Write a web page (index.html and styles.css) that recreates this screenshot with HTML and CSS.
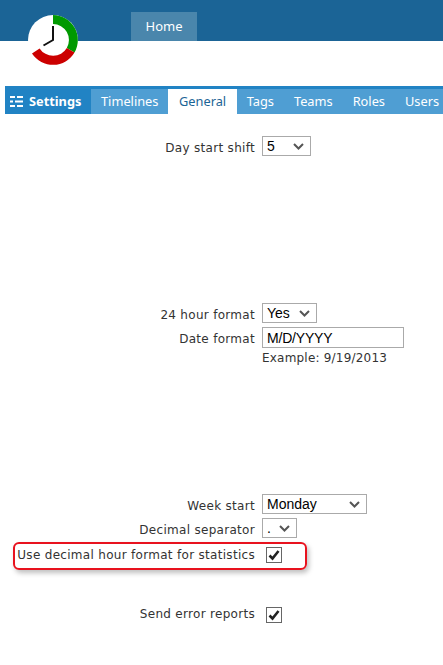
FILE: index.html
```html
<!DOCTYPE html>
<html lang="en">
<head>
  <title>Settings</title>
  <link rel="stylesheet" href="styles.css">
</head>
<body>

  <div class="header">
    <a class="home-tab" href="#">Home</a>
    <svg class="logo" width="50" height="50" viewBox="28 15 50 50">
      <circle cx="53" cy="40" r="25" fill="#fff"/>
      <path d="M53 15A25 25 0 0 1 74.5 52.5L66.8 48A16 16 0 0 0 53 24Z" fill="#009900"/>
      <path d="M74.5 52.5A25 25 0 0 1 32 53.5L39.6 48.4A16 16 0 0 0 66.8 48Z" fill="#cc0000"/>
      <path d="M53 26V40L43.500 45.500" fill="none" stroke="#111" stroke-width="2"/>
    </svg>
  </div>

  <div class="nav">
    <div class="nav-title">
      <svg width="13" height="11" viewBox="0 0 13 11" fill="#fff">
        <path d="M0 0h5v2H0zM7 0h6v2H7zM0 4.500h3v2H0zM5 4.500h8v2H5zM0 9h5v2H0zM7 9h6v2H7z"/>
      </svg>
      Settings
    </div>
    <a href="#">Timelines</a>
    <a href="#" class="active">General</a>
    <a href="#">Tags</a>
    <a href="#">Teams</a>
    <a href="#">Roles</a>
    <a href="#">Users</a>
  </div>

  <form class="settings">
    <div class="row">
      <label>Day start shift</label>
      <select class="select-shift"><option>5</option></select>
    </div>

    <div class="row row-hour">
      <label>24 hour format</label>
      <select class="select-hour"><option>Yes</option></select>
    </div>
    <div class="row row-date">
      <label>Date format</label>
      <input class="date-input" type="text" value="M/D/YYYY">
    </div>
    <div class="example">Example: 9/19/2013</div>

    <div class="row row-week">
      <label>Week start</label>
      <select class="select-week"><option>Monday</option></select>
    </div>
    <div class="row row-separator">
      <label>Decimal separator</label>
      <select class="select-separator"><option>.</option></select>
    </div>
    <div class="row row-decimal">
      <div class="highlight"></div>
      <label>Use decimal hour format for statistics</label>
      <input class="check" type="checkbox" checked>
    </div>
    <div class="row row-errors">
      <label>Send error reports</label>
      <input class="check" type="checkbox" checked>
    </div>
  </form>

</body>
</html>
```

FILE: styles.css
```css
* { box-sizing: border-box; margin: 0; padding: 0; }
body {
  font-family: "DejaVu Sans", sans-serif;
  font-size: 12px;
  color: #333;
  background-color: #fff;
  overflow: hidden;
}
a { text-decoration: none; }

.header {
  position: relative;
  height: 41px;
  padding: 12px 0 0 131px;
  background-color: #1b6496;
}
.home-tab {
  display: block;
  width: 66px;
  height: 29px;
  line-height: 29px;
  text-align: center;
  font-family: "Noto Sans", sans-serif;
  font-size: 13px;
  color: #fff;
  background-color: #4a86ac;
}
.logo { position: absolute; left: 28px; top: 15px; }

.nav {
  display: flex;
  height: 28px;
  margin: 45px 0 0 5px;
  border-top: 3px solid #2183c4;
  background-color: #4f9ed3;
  font-family: "Noto Sans", sans-serif;
  font-size: 12.8px;
  line-height: 25px;
}
.nav a { padding: 0 10px; color: #fff; }
.nav a.active { padding: 0 10.500px; color: #1b6496; background-color: #fff; }
.nav-title {
  display: flex;
  flex: none;
  align-items: center;
  gap: 6px;
  width: 86px;
  padding-left: 5px;
  font-weight: bold;
  color: #fff;
  background-color: #2183c4;
}

.settings { padding-top: 22px; letter-spacing: 0.3px; }
.row { position: relative; display: flex; align-items: center; gap: 7px; }
.row label { flex: 0 0 255px; padding-top: 3px; text-align: right; }
.row-hour { margin-top: 147px; }
.row-date { margin-top: 4px; }
.row-week { margin-top: 129px; }
.row-separator { margin-top: 4px; }
.row-decimal { margin-top: 7px; height: 20px; }
.row-errors { margin-top: 40px; height: 20px; }
.row-decimal label { padding-top: 0; }
.row-errors label { padding-top: 0; padding-bottom: 2px; }

select {
  appearance: none;
  height: 20px;
  padding-left: 4px;
  font-family: "Liberation Sans", sans-serif;
  font-size: 14px;
  letter-spacing: 0;
  color: #000;
  background: #fff url("data:image/svg+xml,%3Csvg xmlns='http://www.w3.org/2000/svg' width='11' height='7'%3E%3Cpath d='M1 1l4.500 4.500L10 1' fill='none' stroke='%23555' stroke-width='2'/%3E%3C/svg%3E") no-repeat right 6px center;
  border: 1px solid #aaa;
  border-radius: 0;
}
.select-shift { width: 49px; }
.select-hour { width: 55px; }
.select-week { width: 105px; }
.select-separator { width: 35px; }

.date-input {
  width: 142px;
  height: 21px;
  padding-left: 4px;
  font-family: "Liberation Sans", sans-serif;
  font-size: 14px;
  letter-spacing: -0.2px;
  color: #000;
  border: 1px solid #aaa;
}
.example { margin: 3px 0 0 262px; letter-spacing: 0.2px; }

.check {
  appearance: none;
  width: 16px;
  height: 16px;
  margin-left: 4px;
  background: #fff url("data:image/svg+xml,%3Csvg xmlns='http://www.w3.org/2000/svg' width='14' height='14'%3E%3Cpath d='M2.500 7.500l3 3L11.500 3' fill='none' stroke='%23222' stroke-width='2.600'/%3E%3C/svg%3E") no-repeat center;
  border: 1px solid #666;
}

.highlight {
  position: absolute;
  left: 13px;
  top: -3px;
  width: 294px;
  height: 28px;
  border: 2px solid #e8121e;
  border-radius: 6px;
  box-shadow: 2px 3px 5px rgba(0,0,0,0.25);
}
```
